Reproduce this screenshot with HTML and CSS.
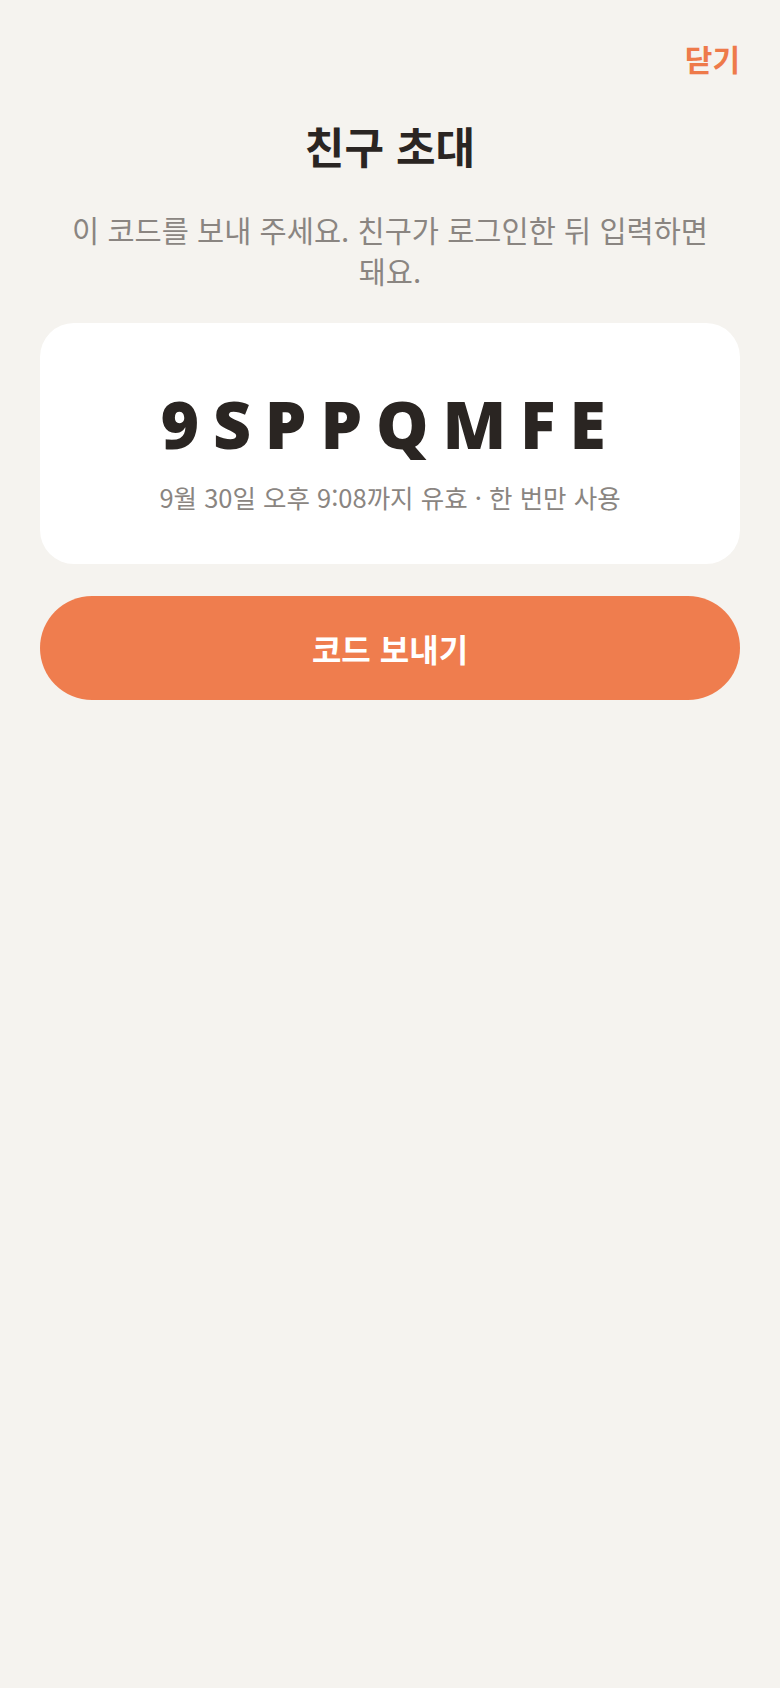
FILE: index.html
```html
<!DOCTYPE html>
<html lang="ko">
<head>
<meta charset="utf-8">
<link rel="stylesheet" href="styles.css">
</head>
<body>
<div class="screen">
  <header class="topbar">
    <button class="close">닫기</button>
  </header>
  <main class="content">
    <h1 class="title">친구 초대</h1>
    <p class="desc">이 코드를 보내 주세요. 친구가 로그인한 뒤 입력하면 돼요.</p>
    <section class="card">
      <div class="code">9SPPQMFE</div>
      <div class="meta">9월 30일 오후 9:08까지 유효 · 한 번만 사용</div>
    </section>
    <button class="send">코드 보내기</button>
  </main>
</div>
</body>
</html>
```

FILE: styles.css
```css
html, body {
  margin: 0;
  padding: 0;
  background: #f5f3ef;
}
body {
  font-family: "Noto Sans CJK KR", "Noto Sans", sans-serif;
  color: #2a2522;
}
.screen {
  min-height: 1688px;
  display: flex;
  flex-direction: column;
}
.topbar {
  display: flex;
  justify-content: flex-end;
  padding: 36px 40px 0 40px;
}
.close {
  border: none;
  background: none;
  padding: 0;
  font-family: inherit;
  font-size: 30px;
  font-weight: 700;
  line-height: 44px;
  color: #ee7a4a;
}
.content {
  display: flex;
  flex-direction: column;
  align-items: stretch;
  padding: 0 40px;
}
.title {
  margin: 35px 0 0 0;
  text-align: center;
  font-size: 43px;
  font-weight: 700;
  line-height: 60px;
  color: #2a2522;
}
.desc {
  margin: 34px 0 0 0;
  text-align: center;
  font-size: 29.5px;
  line-height: 41px;
  color: #8a8581;
  word-break: keep-all;
}
.card {
  margin-top: 32px;
  background: #ffffff;
  border-radius: 34px;
  height: 241px;
  box-sizing: border-box;
  display: flex;
  flex-direction: column;
  align-items: center;
  padding-top: 64px;
}
.code {
  font-family: "Open Sans", "Noto Sans", sans-serif;
  font-size: 66px;
  font-weight: 800;
  letter-spacing: 0.21em;
  line-height: 72px;
  color: #2a2522;
}
.meta {
  margin-top: 21px;
  font-size: 25.5px;
  line-height: 34px;
  color: #8a8581;
}
.send {
  margin-top: 32px;
  height: 104px;
  border: none;
  border-radius: 52px;
  background: #ef7d4e;
  color: #ffffff;
  font-family: inherit;
  font-size: 32px;
  font-weight: 700;
}
```
